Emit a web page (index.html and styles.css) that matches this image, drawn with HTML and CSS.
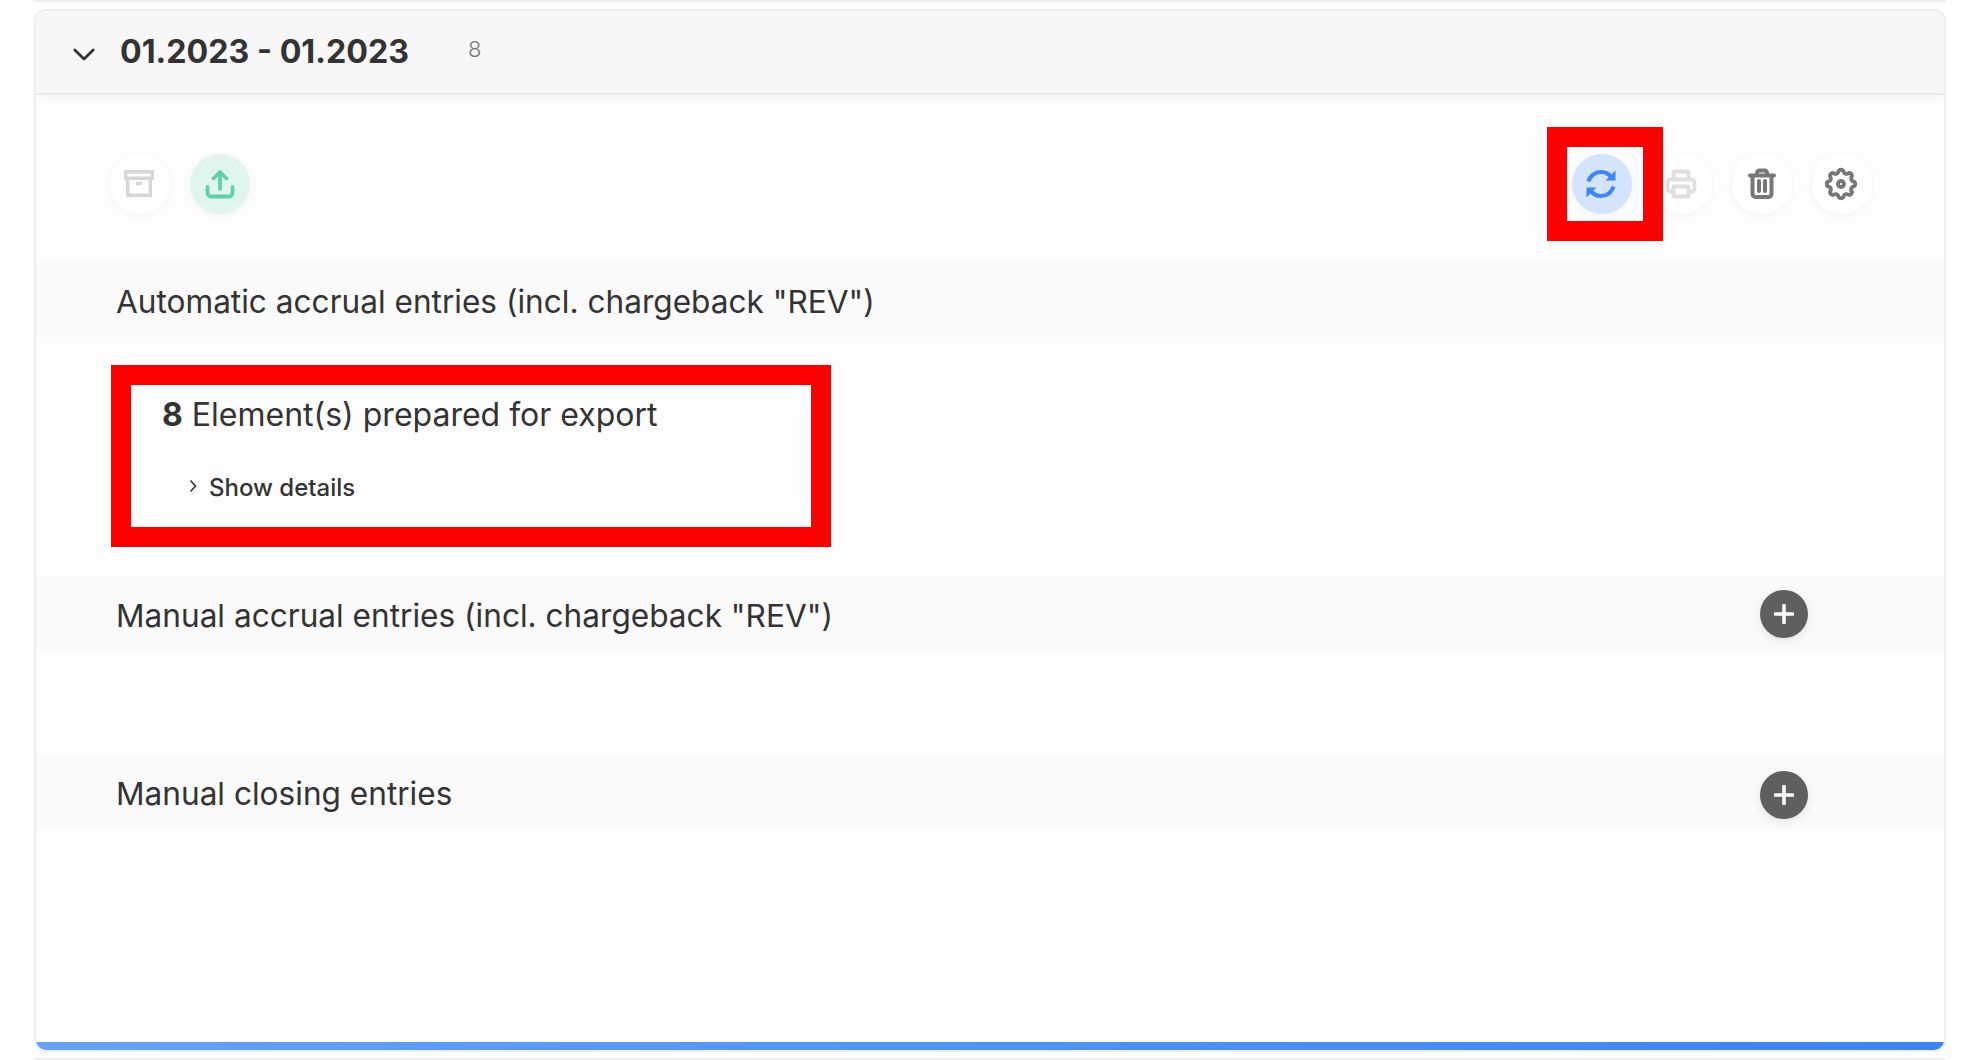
FILE: index.html
```html
<!DOCTYPE html>
<html lang="en">
<head>
<meta charset="utf-8">
<title>Accrual entries</title>
<link rel="stylesheet" href="styles.css">
</head>
<body>
<div class="sliver sliver-top"></div>
<main class="card">
  <header class="card-head">
    <svg class="chev" viewBox="0 0 24 14"><path d="M2 2l10 10L22 2"/></svg>
    <h1 class="title">01.2023 - 01.2023</h1>
    <span class="count">8</span>
  </header>
  <div class="toolbar">
    <div class="tools">
      <button class="tool">
        <svg class="ico ico-light" viewBox="0 0 32 32"><path d="M2.700 3.700h26.600v6.600H2.700zM4.700 10.300v17h22.600v-17M13 15.500h6"/></svg>
      </button>
      <button class="tool tool-green">
        <svg class="ico ico-green" viewBox="0 0 32 32"><path d="M16 21V4.500M9.500 10.500L16 4l6.500 6.500M3.500 19v6a3.500 3.500 0 0 0 3.500 3.500h18a3.500 3.500 0 0 0 3.500-3.500v-6"/></svg>
      </button>
    </div>
    <div class="tools">
      <span class="mark-wrap">
        <button class="tool tool-blue">
          <svg class="ico ico-blue" viewBox="0 0 32 32"><path d="M3.500 13.500C5 8 10 4 16 4c4.500 0 8 2 10.500 5.500M28.500 18.500C27 24 22 28 16 28c-4.500 0-8-2-10.500-5.500"/><path class="fill-blue" d="M30.500 2.500v10h-10zM1.500 29.500v-10h10z"/></svg>
        </button>
        <span class="mark"></span>
      </span>
      <button class="tool">
        <svg class="ico ico-pale" viewBox="0 0 32 32"><path d="M8.500 11V3.500h15V11M8.500 23.500H5a2.500 2.500 0 0 1-2.500-2.500v-7A2.500 2.500 0 0 1 5 11.500h22a2.500 2.500 0 0 1 2.500 2.500v7a2.500 2.500 0 0 1-2.500 2.500h-3.500M8.500 18.500h15v10h-15z"/></svg>
      </button>
      <button class="tool">
        <svg class="ico ico-grey ico-trash" viewBox="0 0 32 32"><path d="M4 7.500h24M11 7V5a2.500 2.500 0 0 1 2.500-2.500h5A2.500 2.500 0 0 1 21 5v2M6.500 8v18a3 3 0 0 0 3 3h13a3 3 0 0 0 3-3V8M13 13v10M19 13v10"/></svg>
      </button>
      <button class="tool">
        <svg class="ico ico-grey ico-gear" viewBox="0 0 24 24"><path d="M10.325 4.317c.426-1.756 2.924-1.756 3.350 0a1.724 1.724 0 0 0 2.573 1.066c1.543-.94 3.310.826 2.370 2.370a1.724 1.724 0 0 0 1.065 2.572c1.756.426 1.756 2.924 0 3.350a1.724 1.724 0 0 0-1.066 2.573c.94 1.543-.826 3.310-2.370 2.370a1.724 1.724 0 0 0-2.572 1.065c-.426 1.756-2.924 1.756-3.350 0a1.724 1.724 0 0 0-2.573-1.066c-1.543.94-3.310-.826-2.370-2.370a1.724 1.724 0 0 0-1.065-2.572c-1.756-.426-1.756-2.924 0-3.350a1.724 1.724 0 0 0 1.066-2.573c-.94-1.543.826-3.310 2.370-2.370.996.608 2.296.07 2.572-1.065z"/><circle cx="12" cy="12" r="1.900"/></svg>
      </button>
    </div>
  </div>
  <section class="band"><h2 class="band-title">Automatic accrual entries (incl. chargeback "REV")</h2></section>
  <div class="export-box">
    <p class="export-line"><strong class="export-num">8</strong> Element(s) prepared for export</p>
    <p class="details">
      <svg class="details-chev" viewBox="0 0 8 14"><path d="M1.500 1.500L6.500 7l-5 5.500"/></svg>
      <span>Show details</span>
    </p>
  </div>
  <section class="band band-first">
    <h2 class="band-title">Manual accrual entries (incl. chargeback "REV")</h2>
    <button class="add"><svg viewBox="0 0 20 20"><path d="M10 1.500v17M1.500 10h17"/></svg></button>
  </section>
  <section class="band band-second">
    <h2 class="band-title">Manual closing entries</h2>
    <button class="add"><svg viewBox="0 0 20 20"><path d="M10 1.500v17M1.500 10h17"/></svg></button>
  </section>
  <div class="spacer"></div>
  <div class="progress"></div>
</main>
<div class="sliver sliver-bottom"></div>
</body>
</html>
```

FILE: styles.css
```css
* { box-sizing: border-box; }
html, body { margin: 0; height: 100%; }
body {
  background: #fff;
  font-family: "Inter", "Liberation Sans", sans-serif;
  color: #333;
  overflow: hidden;
  padding: 0 18px 0 34px;
}
.sliver { height: 2px; background: #eee; }
.sliver-top { border-radius: 0 0 12px 12px; margin-bottom: 7px; }
.sliver-bottom { border-radius: 12px 12px 0 0; margin-top: 6px; }
.card {
  height: 1043px;
  display: flex;
  flex-direction: column;
  background: #fdfdfd;
  border: 2px solid #eee;
  border-radius: 12px;
  overflow: hidden;
}
.card-head {
  height: 84px;
  flex: none;
  display: flex;
  align-items: center;
  background: #f7f7f7;
  border-bottom: 2px solid #ebebeb;
  box-shadow: 0 3px 10px rgba(0,0,0,.03);
  padding: 0 0 0 37px;
}
.chev { width: 22px; height: 13px; margin-top: 4px; fill: none; stroke: #333; stroke-width: 3; stroke-linecap: round; stroke-linejoin: round; }
.title { margin: 0 0 0 25px; font-size: 32.200px; line-height: 40px; font-weight: 700; color: #333; width: 348px; }
.count { font-size: 22px; font-weight: 300; color: #777; margin-top: -6px; }
.toolbar {
  height: 167px;
  flex: none;
  display: flex;
  justify-content: space-between;
  align-items: flex-start;
  padding: 59px 72px 0 74px;
}
.tools { display: flex; gap: 20px; }
.tool {
  width: 60px;
  height: 60px;
  padding: 0;
  border: 0;
  border-radius: 50%;
  background: #fff;
  box-shadow: 0 2px 10px rgba(0,0,0,.04);
  display: flex;
  align-items: center;
  justify-content: center;
}
.tool-green { background: #e0f5ee; }
.tool-blue { background: #d4e4fc; }
.ico { width: 32px; height: 32px; fill: none; stroke-width: 3.400; }
.ico-light { stroke: #d6d6d6; margin-left: -2px; }
.ico-green { stroke: #60d0aa; stroke-width: 3.800; stroke-linecap: round; stroke-linejoin: round; }
.ico-blue { stroke: #3f86f7; stroke-width: 4.200; margin-left: -2px; }
.fill-blue { fill: #3f86f7; stroke: none; }
.ico-pale { stroke: #dfdfdf; stroke-width: 3.800; stroke-linejoin: round; margin-left: -2px; }
.ico-grey { stroke: #777; stroke-linecap: round; stroke-linejoin: round; margin-left: -1px; }
.ico-trash { stroke-width: 4; }
.ico-gear { width: 38px; height: 38px; stroke-width: 2.400; margin-left: -2px; }
.mark-wrap { position: relative; display: block; width: 60px; height: 60px; }
.mark {
  position: absolute;
  left: -25px;
  top: -27px;
  width: 116px;
  height: 114px;
  border: 20px solid #f00;
  pointer-events: none;
}
.band {
  height: 75px;
  flex: none;
  display: flex;
  align-items: center;
  justify-content: space-between;
  background: #fafafa;
  padding: 5px 136px 0 80px;
}
.band-title { margin: 0; font-size: 31.600px; font-weight: 400; color: #333; line-height: 40px; }
.export-box {
  flex: none;
  margin: 28px 0 29px 75px;
  width: 720px;
  height: 182px;
  border: 20px solid #f00;
  background: #fdfdfd;
  padding: 10px 0 0 31px;
}
.export-line { margin: 0; font-size: 32px; line-height: 40px; color: #333; }
.export-num { font-weight: 700; }
.details { margin: 38px 0 0 27px; display: flex; align-items: center; gap: 12px; font-size: 24px; font-weight: 500; line-height: 30px; color: #333; }
.details-chev { width: 8px; height: 14px; fill: none; stroke: #333; stroke-width: 1.600; margin-top: -4px; }
.add {
  width: 48px;
  height: 48px;
  padding: 0;
  border: 0;
  border-radius: 50%;
  background: #5f5f5f;
  box-shadow: 0 2px 8px rgba(0,0,0,.1);
  display: flex;
  align-items: center;
  justify-content: center;
}
.add svg { width: 20px; height: 20px; fill: none; stroke: #fff; stroke-width: 3.600; stroke-linecap: round; }
.band-first .add { margin-top: -5px; }
.band-second { margin-top: 103px; }
.band-second .add { margin-top: 2px; }
.spacer { flex: 1; }
.progress { height: 8px; flex: none; background: linear-gradient(90deg, #64a3f9, #3b82f6); }
```
